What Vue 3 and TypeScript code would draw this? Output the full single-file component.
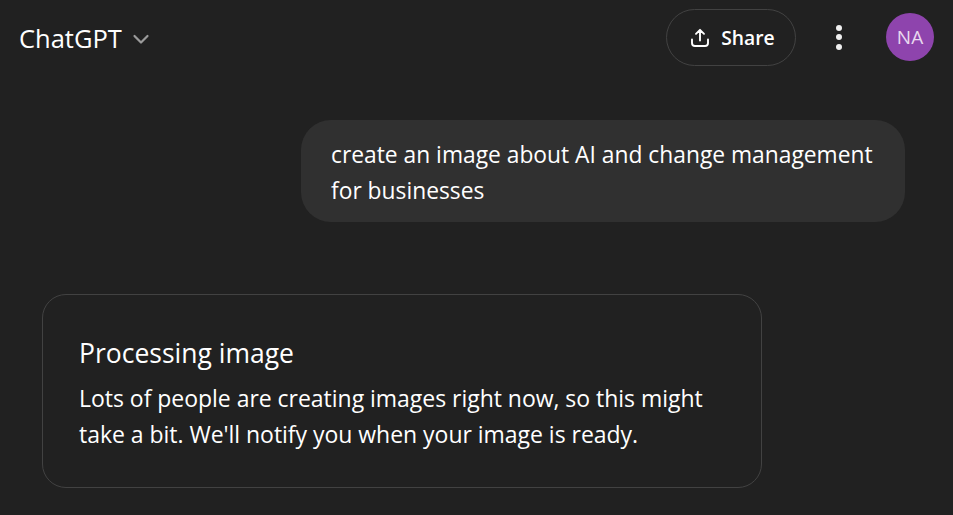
<script setup lang="ts">
const userMessage = 'create an image about AI and change management for businesses'
</script>

<template>
  <div class="page">
    <header class="topbar">
      <div class="model">
        <span class="model-name">ChatGPT</span>
        <svg class="chevron" width="18" height="18" viewBox="0 0 18 18" fill="none">
          <path d="M2.5 6 9 12.5 15.5 6" stroke="#9b9b9b" stroke-width="2.2" stroke-linecap="round" stroke-linejoin="round" />
        </svg>
      </div>
      <div class="actions">
        <button class="share">
          <svg width="20" height="20" viewBox="0 0 20 20" fill="none">
            <path d="M10 12.5V2.2M6 5.8l4-4 4 4M2 11.5V15a3 3 0 0 0 3 3h10a3 3 0 0 0 3-3v-3.5" stroke="#fff" stroke-width="1.9" stroke-linecap="round" stroke-linejoin="round" />
          </svg>
          <span>Share</span>
        </button>
        <div class="more">
          <i></i><i></i><i></i>
        </div>
        <div class="avatar">NA</div>
      </div>
    </header>

    <section class="user-row">
      <div class="bubble">{{ userMessage }}</div>
    </section>

    <section class="notice">
      <h2>Processing image</h2>
      <p>Lots of people are creating images right now, so this might take a bit. We'll notify you when your image is ready.</p>
    </section>
  </div>
</template>

<style>
html, body { margin: 0; background: #212121; }
</style>

<style scoped>
.page {
  width: 953px;
  height: 515px;
  overflow: hidden;
  background: #212121;
  color: #fff;
  font-family: "Open Sans", "Noto Sans", sans-serif;
  box-sizing: border-box;
}
.topbar {
  height: 75px;
  display: flex;
  align-items: center;
  justify-content: space-between;
  padding: 0 19px;
}
.model { display: flex; align-items: center; gap: 10px; padding-top: 1px; }
.model-name { font-size: 25.5px; line-height: 36px; }
.chevron { margin-top: 1px; }
.actions { display: flex; align-items: center; }
.share {
  width: 130px;
  height: 57px;
  box-sizing: border-box;
  border: 1px solid #424242;
  border-radius: 29px;
  background: transparent;
  color: #fff;
  font: 600 19.3px/28px "Open Sans", sans-serif;
  display: flex;
  align-items: center;
  justify-content: center;
  gap: 11px;
  padding: 0 0 0 3px;
}
.more {
  width: 24px;
  margin-left: 31px;
  margin-bottom: 1px;
  display: flex;
  flex-direction: column;
  align-items: center;
  gap: 3.5px;
}
.more i { width: 6px; height: 6px; border-radius: 50%; background: #f0f0f0; }
.avatar {
  width: 48px;
  height: 48px;
  margin-left: 35px;
  margin-bottom: 1px;
  border-radius: 50%;
  background: #8e44ad;
  color: #e8d8ef;
  font-size: 19px;
  display: flex;
  align-items: center;
  justify-content: center;
}
.user-row {
  display: flex;
  justify-content: flex-end;
  padding: 45px 48px 0 0;
}
.bubble {
  width: 604px;
  box-sizing: border-box;
  padding: 17px 26px 13px 30px;
  background: #303030;
  border-radius: 30px;
  font-size: 22.8px;
  line-height: 36px;
}
.notice {
  width: 720px;
  box-sizing: border-box;
  margin: 72px 0 0 42px;
  padding: 40px 36px 35px;
  border: 1px solid #424242;
  border-radius: 24px;
}
.notice h2 { margin: 0 0 9px; font-size: 26.5px; font-weight: 500; line-height: 36px; }
.notice p { margin: 0; font-size: 23px; line-height: 36px; letter-spacing: -0.03px; }
</style>
